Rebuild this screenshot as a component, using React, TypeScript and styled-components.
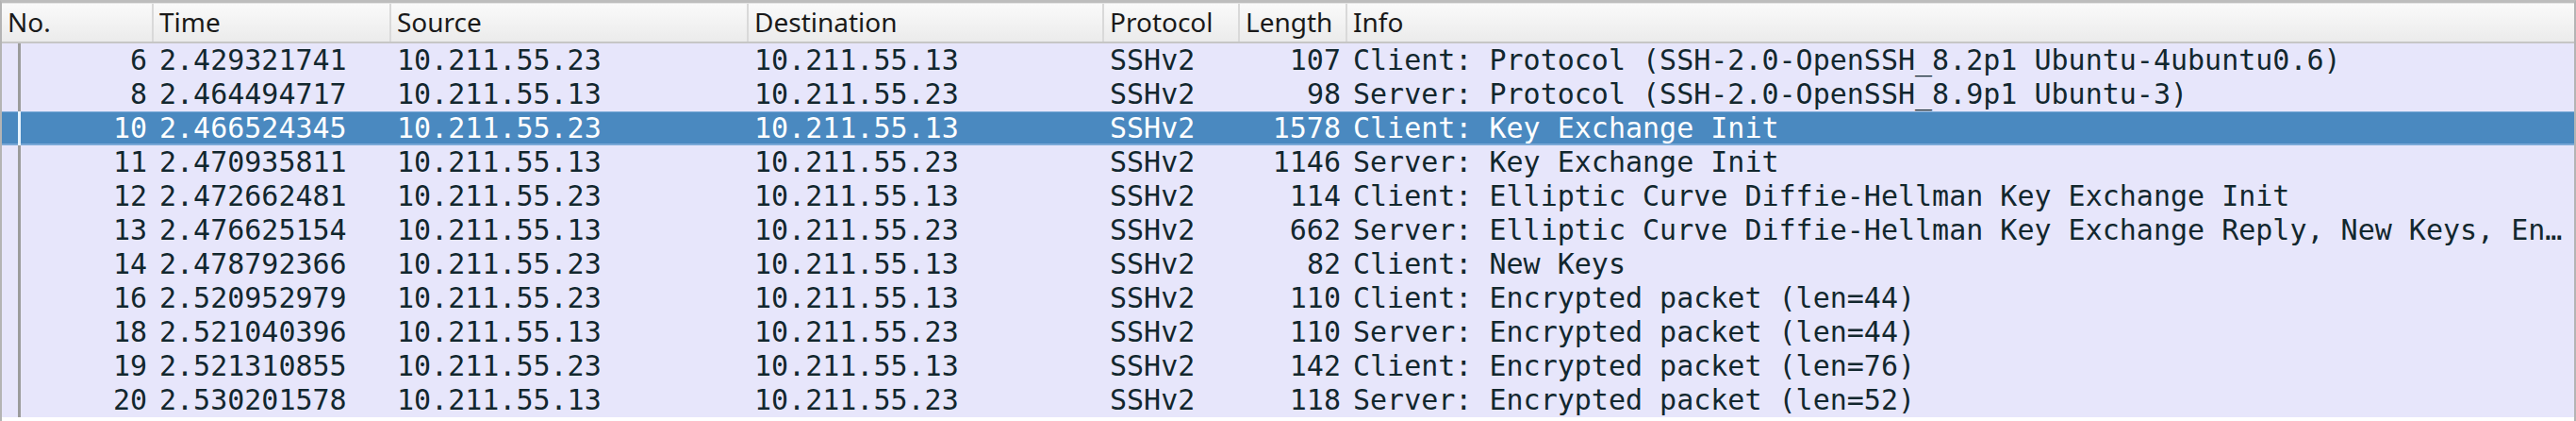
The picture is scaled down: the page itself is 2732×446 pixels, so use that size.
import React from "react";
import styled, { createGlobalStyle, css } from "styled-components";

const GlobalStyle = createGlobalStyle`
  html, body { margin: 0; padding: 0; background: #ffffff; }
  #root { width: 2732px; height: 446px; }
`;

const COLUMNS = "161px 252px 379px 377px 144px 114px 1fr";

type Packet = {
  no: number;
  time: string;
  src: string;
  dst: string;
  proto: string;
  len: number;
  info: string;
};

const A = "10.211.55.23";
const B = "10.211.55.13";

const packets: Packet[] = [
  { no: 6, time: "2.429321741", src: A, dst: B, proto: "SSHv2", len: 107, info: "Client: Protocol (SSH-2.0-OpenSSH_8.2p1 Ubuntu-4ubuntu0.6)" },
  { no: 8, time: "2.464494717", src: B, dst: A, proto: "SSHv2", len: 98, info: "Server: Protocol (SSH-2.0-OpenSSH_8.9p1 Ubuntu-3)" },
  { no: 10, time: "2.466524345", src: A, dst: B, proto: "SSHv2", len: 1578, info: "Client: Key Exchange Init" },
  { no: 11, time: "2.470935811", src: B, dst: A, proto: "SSHv2", len: 1146, info: "Server: Key Exchange Init" },
  { no: 12, time: "2.472662481", src: A, dst: B, proto: "SSHv2", len: 114, info: "Client: Elliptic Curve Diffie-Hellman Key Exchange Init" },
  { no: 13, time: "2.476625154", src: B, dst: A, proto: "SSHv2", len: 662, info: "Server: Elliptic Curve Diffie-Hellman Key Exchange Reply, New Keys, Encrypted packet (len=228)" },
  { no: 14, time: "2.478792366", src: A, dst: B, proto: "SSHv2", len: 82, info: "Client: New Keys" },
  { no: 16, time: "2.520952979", src: A, dst: B, proto: "SSHv2", len: 110, info: "Client: Encrypted packet (len=44)" },
  { no: 18, time: "2.521040396", src: B, dst: A, proto: "SSHv2", len: 110, info: "Server: Encrypted packet (len=44)" },
  { no: 19, time: "2.521310855", src: A, dst: B, proto: "SSHv2", len: 142, info: "Client: Encrypted packet (len=76)" },
  { no: 20, time: "2.530201578", src: B, dst: A, proto: "SSHv2", len: 118, info: "Server: Encrypted packet (len=52)" },
];

const SELECTED = 10;

const Frame = styled.div`
  box-sizing: border-box;
  width: 2732px;
  height: 446px;
  border-top: 3px solid #bdbdbd;
  border-left: 2px solid #b4b4b4;
  border-right: 2px solid #b4b4b4;
  background: #ffffff;
  display: flex;
  flex-direction: column;
  overflow: hidden;
`;

const HeaderRow = styled.div`
  display: grid;
  grid-template-columns: ${COLUMNS};
  height: 40px;
  border-top: 1px solid #e4e4e4;
  border-bottom: 2px solid #c6c6c6;
  background: linear-gradient(#fafafa, #ebebeb);
`;

const HeaderCell = styled.div<{ $last?: boolean }>`
  box-sizing: border-box;
  padding: 0 6px 2px 6px;
  display: flex;
  align-items: center;
  font-family: "Noto Sans", "DejaVu Sans", sans-serif;
  font-size: 28px;
  color: #1a1a1a;
  white-space: nowrap;
  overflow: hidden;
  border-right: ${(p) => (p.$last ? "none" : "2px solid #d9d9d9")};
`;

const Body = styled.div`
  display: flex;
  flex-direction: column;
`;

const Row = styled.div<{ $selected?: boolean }>`
  display: grid;
  grid-template-columns: ${COLUMNS};
  height: 36px;
  background: #e7e6fb;
  color: #12272e;
  ${(p) =>
    p.$selected &&
    css`
      background: #4a89c0;
      color: #ffffff;
      box-shadow: inset 0 1px 0 #79a8d6, inset 0 -2px 0 #79a8d6;
    `}
`;

const Cell = styled.div<{ $align?: "left" | "right" }>`
  box-sizing: border-box;
  padding: 0 7px 0 6px;
  font-family: "DejaVu Sans Mono", "Liberation Mono", monospace;
  font-size: 30px;
  line-height: 36px;
  white-space: nowrap;
  overflow: hidden;
  text-overflow: ellipsis;
  text-align: ${(p) => p.$align ?? "left"};
`;

const NoCell = styled.div`
  display: flex;
  align-items: stretch;
  padding-left: 17px;
`;

const Indicator = styled.div<{ $selected?: boolean }>`
  width: 3px;
  flex: none;
  background: ${(p) => (p.$selected ? "#e8f4ff" : "#9b9b9b")};
`;

const NoText = styled(Cell)`
  flex: 1;
  text-align: right;
`;

const headers = ["No.", "Time", "Source", "Destination", "Protocol", "Length", "Info"];

export default function App() {
  return (
    <>
      <GlobalStyle />
      <Frame>
        <HeaderRow>
          {headers.map((h, i) => (
            <HeaderCell key={h} $last={i === headers.length - 1}>
              {h}
            </HeaderCell>
          ))}
        </HeaderRow>
        <Body>
          {packets.map((p) => {
            const sel = p.no === SELECTED;
            return (
              <Row key={p.no} $selected={sel}>
                <NoCell>
                  <Indicator $selected={sel} />
                  <NoText>{p.no}</NoText>
                </NoCell>
                <Cell>{p.time}</Cell>
                <Cell>{p.src}</Cell>
                <Cell>{p.dst}</Cell>
                <Cell>{p.proto}</Cell>
                <Cell $align="right">{p.len}</Cell>
                <Cell>{p.info}</Cell>
              </Row>
            );
          })}
        </Body>
      </Frame>
    </>
  );
}
